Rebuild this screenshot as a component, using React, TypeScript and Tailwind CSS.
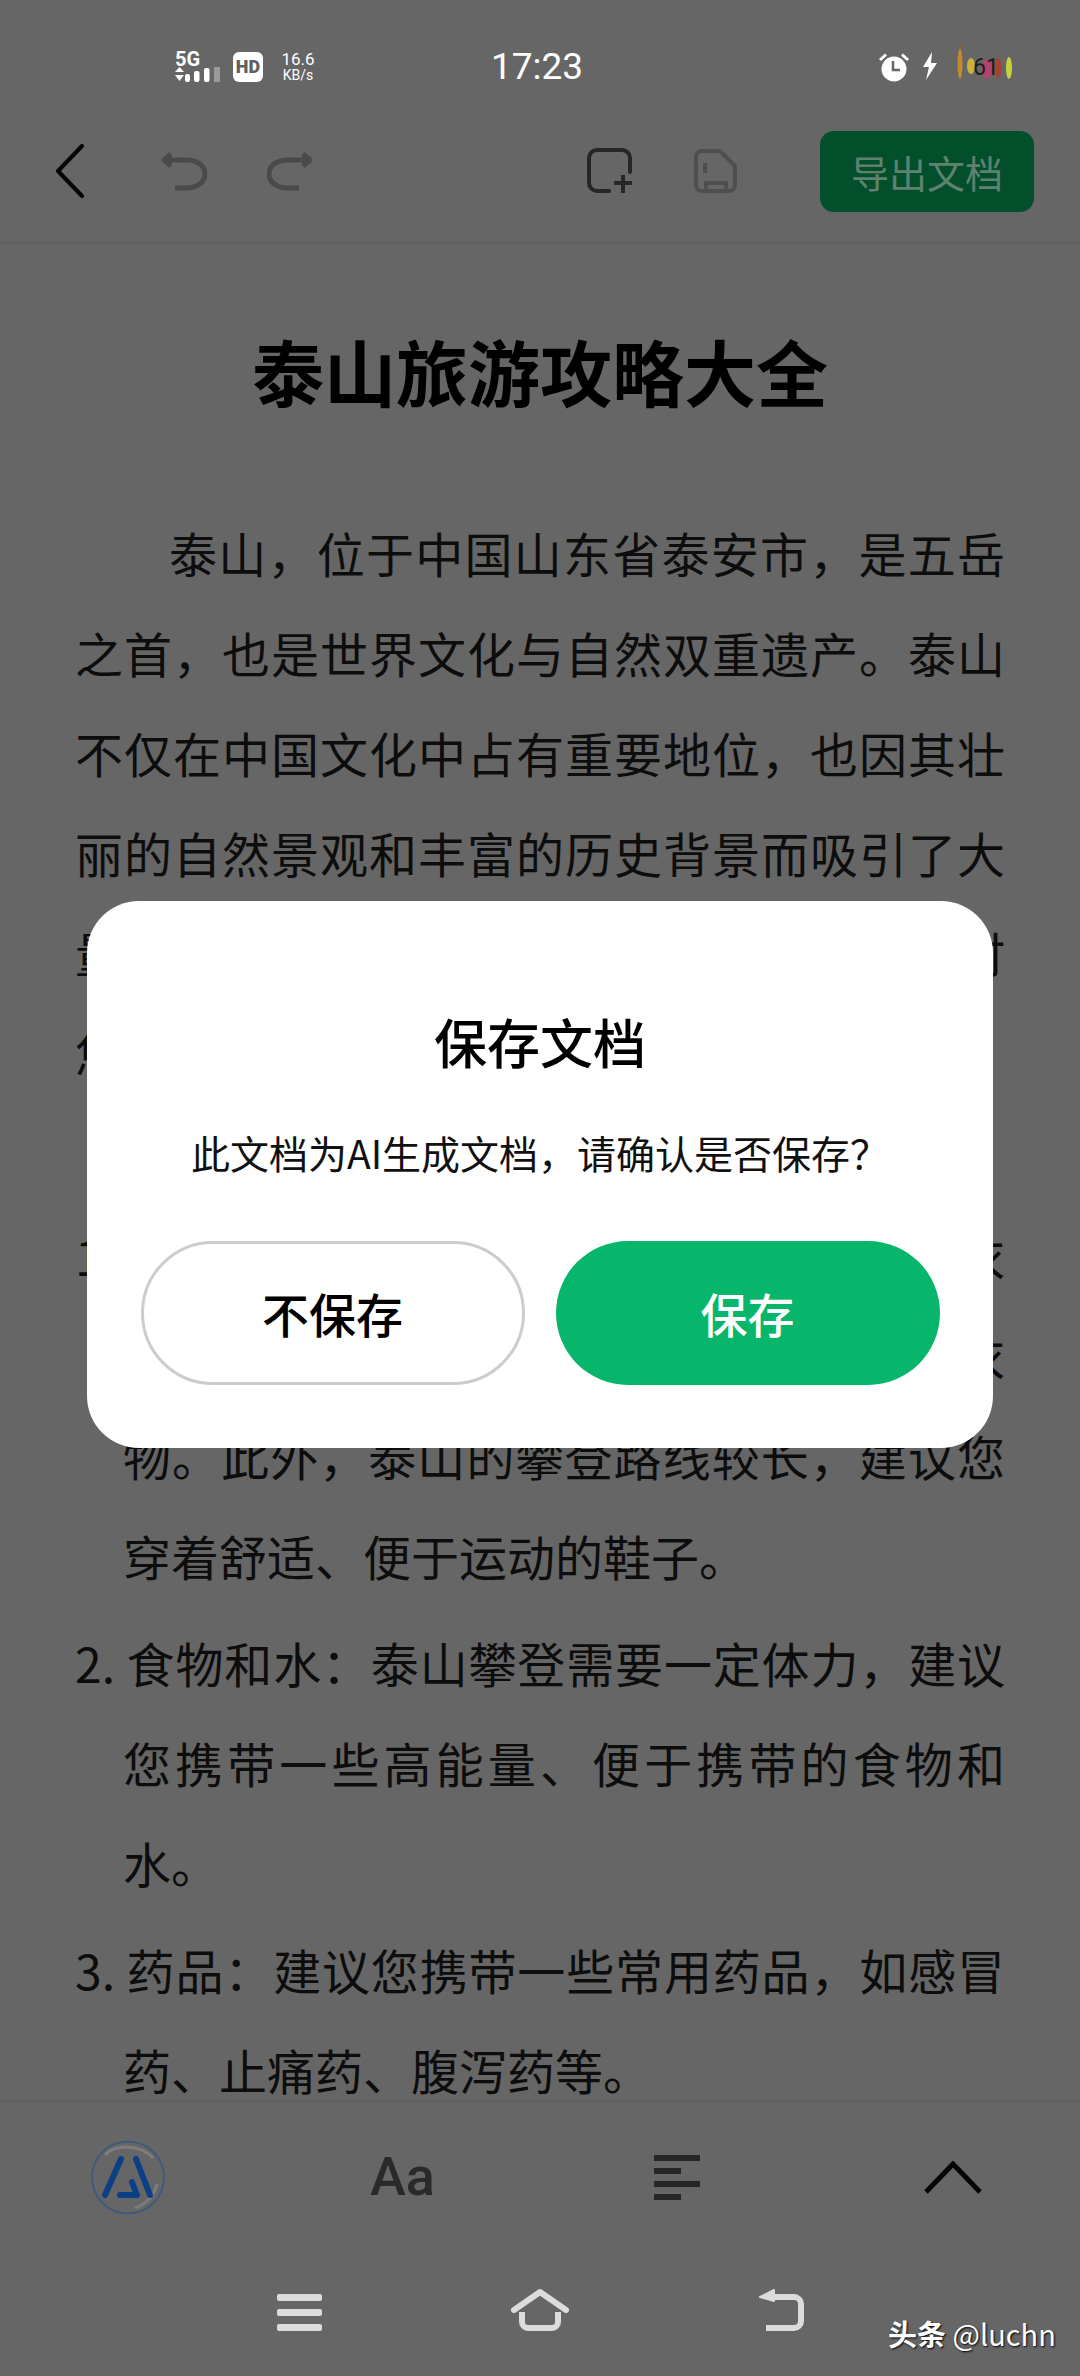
const cjk = "font-['Noto_Sans_CJK_SC','Noto_Sans',sans-serif]";

function Line({ text, indent, last }: { text: string; indent?: boolean; last?: boolean }) {
  return (
    <div
      className={`h-[100px] leading-[100px] text-[48px] text-[#0d0d0d] whitespace-nowrap ${
        last ? '' : 'text-justify [text-align-last:justify]'
      } ${indent ? 'pl-[94px]' : ''}`}
    >
      {text}
    </div>
  );
}

function StatusBar() {
  return (
    <div className="h-[100px] flex items-start pt-[52px] pl-[175px] text-white font-['Roboto',sans-serif]">
      <div className="w-[45px] h-[30px] flex flex-col">
        <div className="h-[15px] leading-[15px] text-[20px] font-bold">5G</div>
        <svg width="45" height="15" viewBox="0 0 45 15" fill="white">
          <path d="M0 5 L4.500 0 L9 5 Z" />
          <path d="M0 8 H9 L4.500 14 Z" />
          <rect x="10" y="7" width="5" height="8" rx="2" />
          <rect x="19" y="4" width="5.500" height="11" rx="2" />
          <rect x="29" y="1" width="5.500" height="14" rx="2" />
          <rect x="39" y="0" width="6" height="15" fill="#9a9a9a" />
        </svg>
      </div>
      <div className="ml-[13px] w-[30px] h-[30px] rounded-[6px] bg-white flex items-center justify-center text-[#5f5f5f] text-[18px] font-black leading-none">
        HD
      </div>
      <div className="ml-[17px] w-[36px] flex flex-col items-center -mt-[1px]">
        <div className="text-[17px] leading-[16px]">16.6</div>
        <div className="text-[14px] leading-[16px]">KB/s</div>
      </div>
      <div className="ml-[175px] -mt-[8px] text-[37px] leading-[46px] w-[92px] text-center">17:23</div>
      <div className="ml-[296px] flex items-start">
        <svg width="30" height="30" viewBox="0 0 30 30" fill="white">
          <circle cx="15" cy="17" r="12.500" />
          <path d="M1 8 L7 2.500" stroke="white" strokeWidth="3" />
          <path d="M29 8 L23 2.500" stroke="white" strokeWidth="3" />
          <path d="M14 9 V18 H21" stroke="#666666" strokeWidth="2.500" fill="none" />
        </svg>
        <svg className="ml-[13px]" width="16" height="28" viewBox="0 0 16 28" fill="white">
          <path d="M10 0 L1 15 H7 L4 28 L15 11 H9 Z" />
        </svg>
        <div className="relative ml-[19px] w-[56px] h-[38px] -mt-[8px]">
          <svg width="56" height="38" viewBox="0 0 56 38" fill="none">
            <path d="M3 0 L3 4" stroke="#8a6a2a" strokeWidth="1.500" />
            <ellipse cx="3" cy="20" rx="2.500" ry="15" fill="#c58a2e" />
            <ellipse cx="14" cy="22" rx="4" ry="8" fill="#c9b13c" />
            <ellipse cx="30" cy="25" rx="5" ry="10" fill="#b8436a" />
            <ellipse cx="41" cy="24" rx="3.500" ry="10" fill="#a8432f" />
            <ellipse cx="52" cy="24" rx="3" ry="11" fill="#c7d23a" />
          </svg>
          <div className="absolute left-[16px] top-[12px] text-[23px] leading-[24px] text-[#1d1d1d]">61</div>
        </div>
      </div>
    </div>
  );
}

function Toolbar() {
  return (
    <div className="h-[144px] flex items-center justify-between pl-[56px] pr-[46px] border-b-[2px] border-[#5f5f5f]">
      <div className="flex items-center">
        <svg width="28" height="54" viewBox="0 0 28 54" fill="none" stroke="#050505" strokeWidth="4" strokeLinecap="round" strokeLinejoin="round">
          <path d="M26 2 L2 27 L26 52" />
        </svg>
        <svg className="ml-[78px]" width="45" height="39" viewBox="0 0 45 39" fill="none" stroke="#4a4a4a" strokeWidth="5">
          <path d="M9 2 L2 8 L9 14 M2 8 H24 C36 8 43 14 43 22 C43 31 34 36 24 36 H13" />
        </svg>
        <svg className="ml-[60px] -scale-x-100" width="45" height="39" viewBox="0 0 45 39" fill="none" stroke="#4a4a4a" strokeWidth="5">
          <path d="M9 2 L2 8 L9 14 M2 8 H24 C36 8 43 14 43 22 C43 31 34 36 24 36 H13" />
        </svg>
      </div>
      <div className="flex items-center">
        <svg width="45" height="46" viewBox="0 0 45 46" fill="none" stroke="#262626" strokeWidth="4" strokeLinecap="round">
          <path d="M22 43 H10 a8 8 0 0 1 -8 -8 V10 a8 8 0 0 1 8 -8 H35 a8 8 0 0 1 8 8 V24" />
          <path d="M36 27 V45 M27 35 H45" strokeLinecap="butt" />
        </svg>
        <svg className="ml-[62px]" width="43" height="45" viewBox="0 0 43 45" fill="none" stroke="#4f4f4f" strokeWidth="4" strokeLinejoin="round">
          <path d="M8 2 H26 L41 17 V36 a6 6 0 0 1 -6 6 H8 a6 6 0 0 1 -6 -6 V8 a6 6 0 0 1 6 -6 Z" />
          <path d="M11 14 V24" />
          <path d="M12 42 V34 H32 V42" />
        </svg>
        <div className="ml-[83px] w-[214px] h-[81px] rounded-[14px] bg-[#034f2c] flex items-center justify-center text-[38px] text-[#5f8270]">
          导出文档
        </div>
      </div>
    </div>
  );
}

function Article() {
  return (
    <div className="flex-1 min-h-0 px-[75px]">
      <h1 className="mt-[86px] text-center text-[72px] leading-[80px] font-bold text-black">泰山旅游攻略大全</h1>
      <div className="mt-[92px]">
        <Line indent text="泰山，位于中国山东省泰安市，是五岳" />
        <Line text="之首，也是世界文化与自然双重遗产。泰山" />
        <Line text="不仅在中国文化中占有重要地位，也因其壮" />
        <Line text="丽的自然景观和丰富的历史背景而吸引了大" />
        <Line text="量游客。为了让您在泰山度过愉快的旅行时" />
        <Line last text="您可以参考以下攻略。" />
        <div className="h-[100px] leading-[100px] text-[48px] pl-[96px] text-[#0d0d0d]">旅游前的准备</div>
      </div>
      <div className="mt-[3px]">
        <Line text="1. 衣物：泰山气候多变，建议您携带适量衣" />
        <div className="pl-[48px]">
          <Line text="服，山顶气温较低，应准备一件保暖外衣" />
          <Line text="物。此外，泰山的攀登路线较长，建议您" />
          <Line last text="穿着舒适、便于运动的鞋子。" />
        </div>
      </div>
      <div className="mt-[7px]">
        <Line text="2. 食物和水：泰山攀登需要一定体力，建议" />
        <div className="pl-[48px]">
          <Line text="您携带一些高能量、便于携带的食物和" />
          <Line last text="水。" />
        </div>
      </div>
      <div className="mt-[7px]">
        <Line text="3. 药品：建议您携带一些常用药品，如感冒" />
        <div className="pl-[48px]">
          <Line last text="药、止痛药、腹泻药等。" />
        </div>
      </div>
    </div>
  );
}

function BottomBar() {
  return (
    <div className="h-[276px] border-t-[2px] border-[#5f5f5f] flex flex-col">
      <div className="h-[150px] flex items-center pl-[91px]">
        <svg width="74" height="75" viewBox="0 0 74 75" fill="none">
          <circle cx="37" cy="37.500" r="36" stroke="#3f5a7c" strokeWidth="2" />
          <path d="M14 15 C24 4 50 4 62 18" stroke="#7d7d7d" strokeWidth="3" />
          <path d="M44 68 C56 64 64 54 66 44" stroke="#7d7d7d" strokeWidth="3" />
          <path d="M14 55 L30 19 M45 19 L59 55 M29 55 H46 L41 42" stroke="#0b3f86" strokeWidth="6" strokeLinecap="round" strokeLinejoin="round" />
        </svg>
        <div className="ml-[205px] w-[65px] text-[54px] leading-none font-medium text-[#2a2a2a] font-['Roboto',sans-serif]">Aa</div>
        <div className="ml-[219px] w-[46px] flex flex-col items-start gap-[7px]">
          <div className="w-[46px] h-[6px] bg-[#262626]" />
          <div className="w-[27px] h-[6px] bg-[#262626]" />
          <div className="w-[46px] h-[6px] bg-[#262626]" />
          <div className="w-[27px] h-[6px] bg-[#262626]" />
        </div>
        <svg className="ml-[224px]" width="58" height="33" viewBox="0 0 58 33" fill="none" stroke="#050505" strokeWidth="5">
          <path d="M2 31 L29 3 L56 31" />
        </svg>
      </div>
      <div className="flex items-start pl-[277px] pt-[36px]">
        <div className="w-[45px] flex flex-col gap-[8px] mt-[6px]">
          <div className="h-[7px] rounded-[2px] bg-[#dcdcdc]" />
          <div className="h-[7px] rounded-[2px] bg-[#dcdcdc]" />
          <div className="h-[7px] rounded-[2px] bg-[#dcdcdc]" />
        </div>
        <svg className="ml-[189px]" width="58" height="44" viewBox="0 0 58 44" fill="none" stroke="#dcdcdc" strokeWidth="6" strokeLinejoin="round">
          <path d="M3 22 L29 4 L55 22" strokeLinecap="round" />
          <path d="M11 24 V34 a6 6 0 0 0 6 6 H41 a6 6 0 0 0 6 -6 V24" />
        </svg>
        <svg className="ml-[187px]" width="48" height="44" viewBox="0 0 48 44" fill="none" stroke="#dcdcdc" strokeWidth="6" strokeLinejoin="round">
          <path d="M18 2 L4 9 L18 13 Z" fill="#dcdcdc" strokeWidth="2" />
          <path d="M14 9 H38 a7 7 0 0 1 7 7 V33 a7 7 0 0 1 -7 7 H10" />
        </svg>
      </div>
    </div>
  );
}

function SaveDialog() {
  return (
    <div className="absolute left-[87px] top-[901px] w-[906px] h-[547px] rounded-[52px] bg-white flex flex-col items-center">
      <div className="mt-[108px] text-[53px] leading-[64px] font-medium text-black">保存文档</div>
      <div className="mt-[52px] text-[39px] leading-[54px] text-[#111111]">此文档为AI生成文档，请确认是否保存？</div>
      <div className="mt-[62px] flex gap-[31px]">
        <div className="w-[384px] h-[144px] rounded-full border-[3px] border-[#cccccc] flex items-center justify-center text-[47px] font-medium text-black">
          不保存
        </div>
        <div className="w-[384px] h-[144px] rounded-full bg-[#07b66a] flex items-center justify-center text-[47px] font-medium text-white">
          保存
        </div>
      </div>
    </div>
  );
}

export default function App() {
  return (
    <div className={`relative w-[1080px] h-[2376px] overflow-hidden bg-[#666666] flex flex-col ${cjk}`}>
      <StatusBar />
      <Toolbar />
      <Article />
      <BottomBar />
      <SaveDialog />
      <div className="absolute left-[888px] top-[2313px] text-[29px] leading-[40px] text-white [text-shadow:1px_1px_2px_#000000]">
        <span className="font-bold">头条</span> @luchn
      </div>
    </div>
  );
}
